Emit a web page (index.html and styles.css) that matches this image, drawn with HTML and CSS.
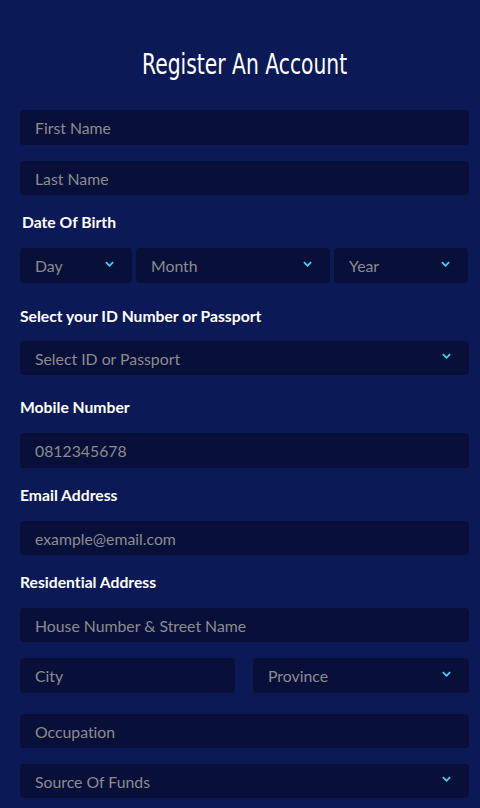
FILE: index.html
```html
<!DOCTYPE html>
<html lang="en">
<head>
<meta charset="utf-8">
<title>Register An Account</title>
<link rel="stylesheet" href="styles.css">
</head>
<body>
<main class="page">
  <h1 class="title"><span class="title-text">Register An Account</span></h1>
  <form class="form">
    <div class="field f-first">First Name</div>
    <div class="field f-last">Last Name</div>

    <div class="label l-dob">Date Of Birth</div>
    <div class="row dob">
      <div class="field select day"><span>Day</span><svg class="chev" viewBox="0 0 10 6"><path d="M1 1l4 4 4-4"/></svg></div>
      <div class="field select month"><span>Month</span><svg class="chev" viewBox="0 0 10 6"><path d="M1 1l4 4 4-4"/></svg></div>
      <div class="field select year"><span>Year</span><svg class="chev" viewBox="0 0 10 6"><path d="M1 1l4 4 4-4"/></svg></div>
    </div>

    <div class="label l-id">Select your ID Number or Passport</div>
    <div class="field select f-id"><span>Select ID or Passport</span><svg class="chev" viewBox="0 0 10 6"><path d="M1 1l4 4 4-4"/></svg></div>

    <div class="label l-mobile">Mobile Number</div>
    <div class="field f-mobile">0812345678</div>

    <div class="label l-email">Email Address</div>
    <div class="field f-email">example@email.com</div>

    <div class="label l-res">Residential Address</div>
    <div class="field f-house">House Number &amp; Street Name</div>
    <div class="row city-row">
      <div class="field city">City</div>
      <div class="field select province"><span>Province</span><svg class="chev" viewBox="0 0 10 6"><path d="M1 1l4 4 4-4"/></svg></div>
    </div>
    <div class="field f-occ">Occupation</div>
    <div class="field select f-funds"><span>Source Of Funds</span><svg class="chev" viewBox="0 0 10 6"><path d="M1 1l4 4 4-4"/></svg></div>
  </form>
</main>
</body>
</html>
```
FILE: styles.css
```css
html, body {
  margin: 0;
  padding: 0;
  background: #0b1a56;
}
body {
  font-family: "Lato", "Noto Sans", sans-serif;
  font-variant-ligatures: none;
  color: #fff;
}
.page {
  padding: 40px 11px 0 20px;
}
.title {
  margin: 0;
  height: 46px;
  line-height: 48px;
  text-align: center;
  font-family: "DejaVu Sans", sans-serif;
  font-weight: normal;
  font-size: 29px;
  color: #fff;
}
.title-text {
  display: inline-block;
  transform: scaleX(0.7);
}
.form {
  display: flex;
  flex-direction: column;
  margin-top: 24px;
}
.field {
  height: 35px;
  box-sizing: border-box;
  background: #081039;
  border-radius: 4px;
  padding: 0 15px;
  display: flex;
  align-items: center;
  font-size: 15.8px;
  color: #8c8c8f;
}
.select {
  justify-content: space-between;
  padding-right: 18px;
}
.chev {
  width: 9px;
  height: 6px;
  margin-top: -4px;
  fill: none;
  stroke: #3fd3f2;
  stroke-width: 2;
}
.label {
  height: 20px;
  line-height: 20px;
  font-size: 15.7px;
  font-weight: bold;
  color: #fff;
}
.row {
  display: flex;
}
.f-last { margin-top: 16px; height: 34px; }
.l-dob { margin-top: 17px; margin-left: 2px; }
.dob { margin-top: 16px; gap: 4px; margin-right: 1px; }
.day { width: 112px; }
.month { flex: 1; }
.year { width: 134px; }
.l-id { margin-top: 23px; }
.f-id { margin-top: 15px; height: 34px; }
.l-mobile { margin-top: 22px; }
.f-mobile { margin-top: 16px; }
.l-email { margin-top: 17px; }
.f-email { margin-top: 16px; height: 34px; }
.l-res { margin-top: 17px; }
.f-house { margin-top: 16px; height: 34px; }
.city-row { margin-top: 16px; justify-content: space-between; }
.city { width: 215px; }
.province { width: 216px; }
.f-occ { margin-top: 21px; height: 34px; }
.f-funds { margin-top: 16px; height: 34px; }
```
